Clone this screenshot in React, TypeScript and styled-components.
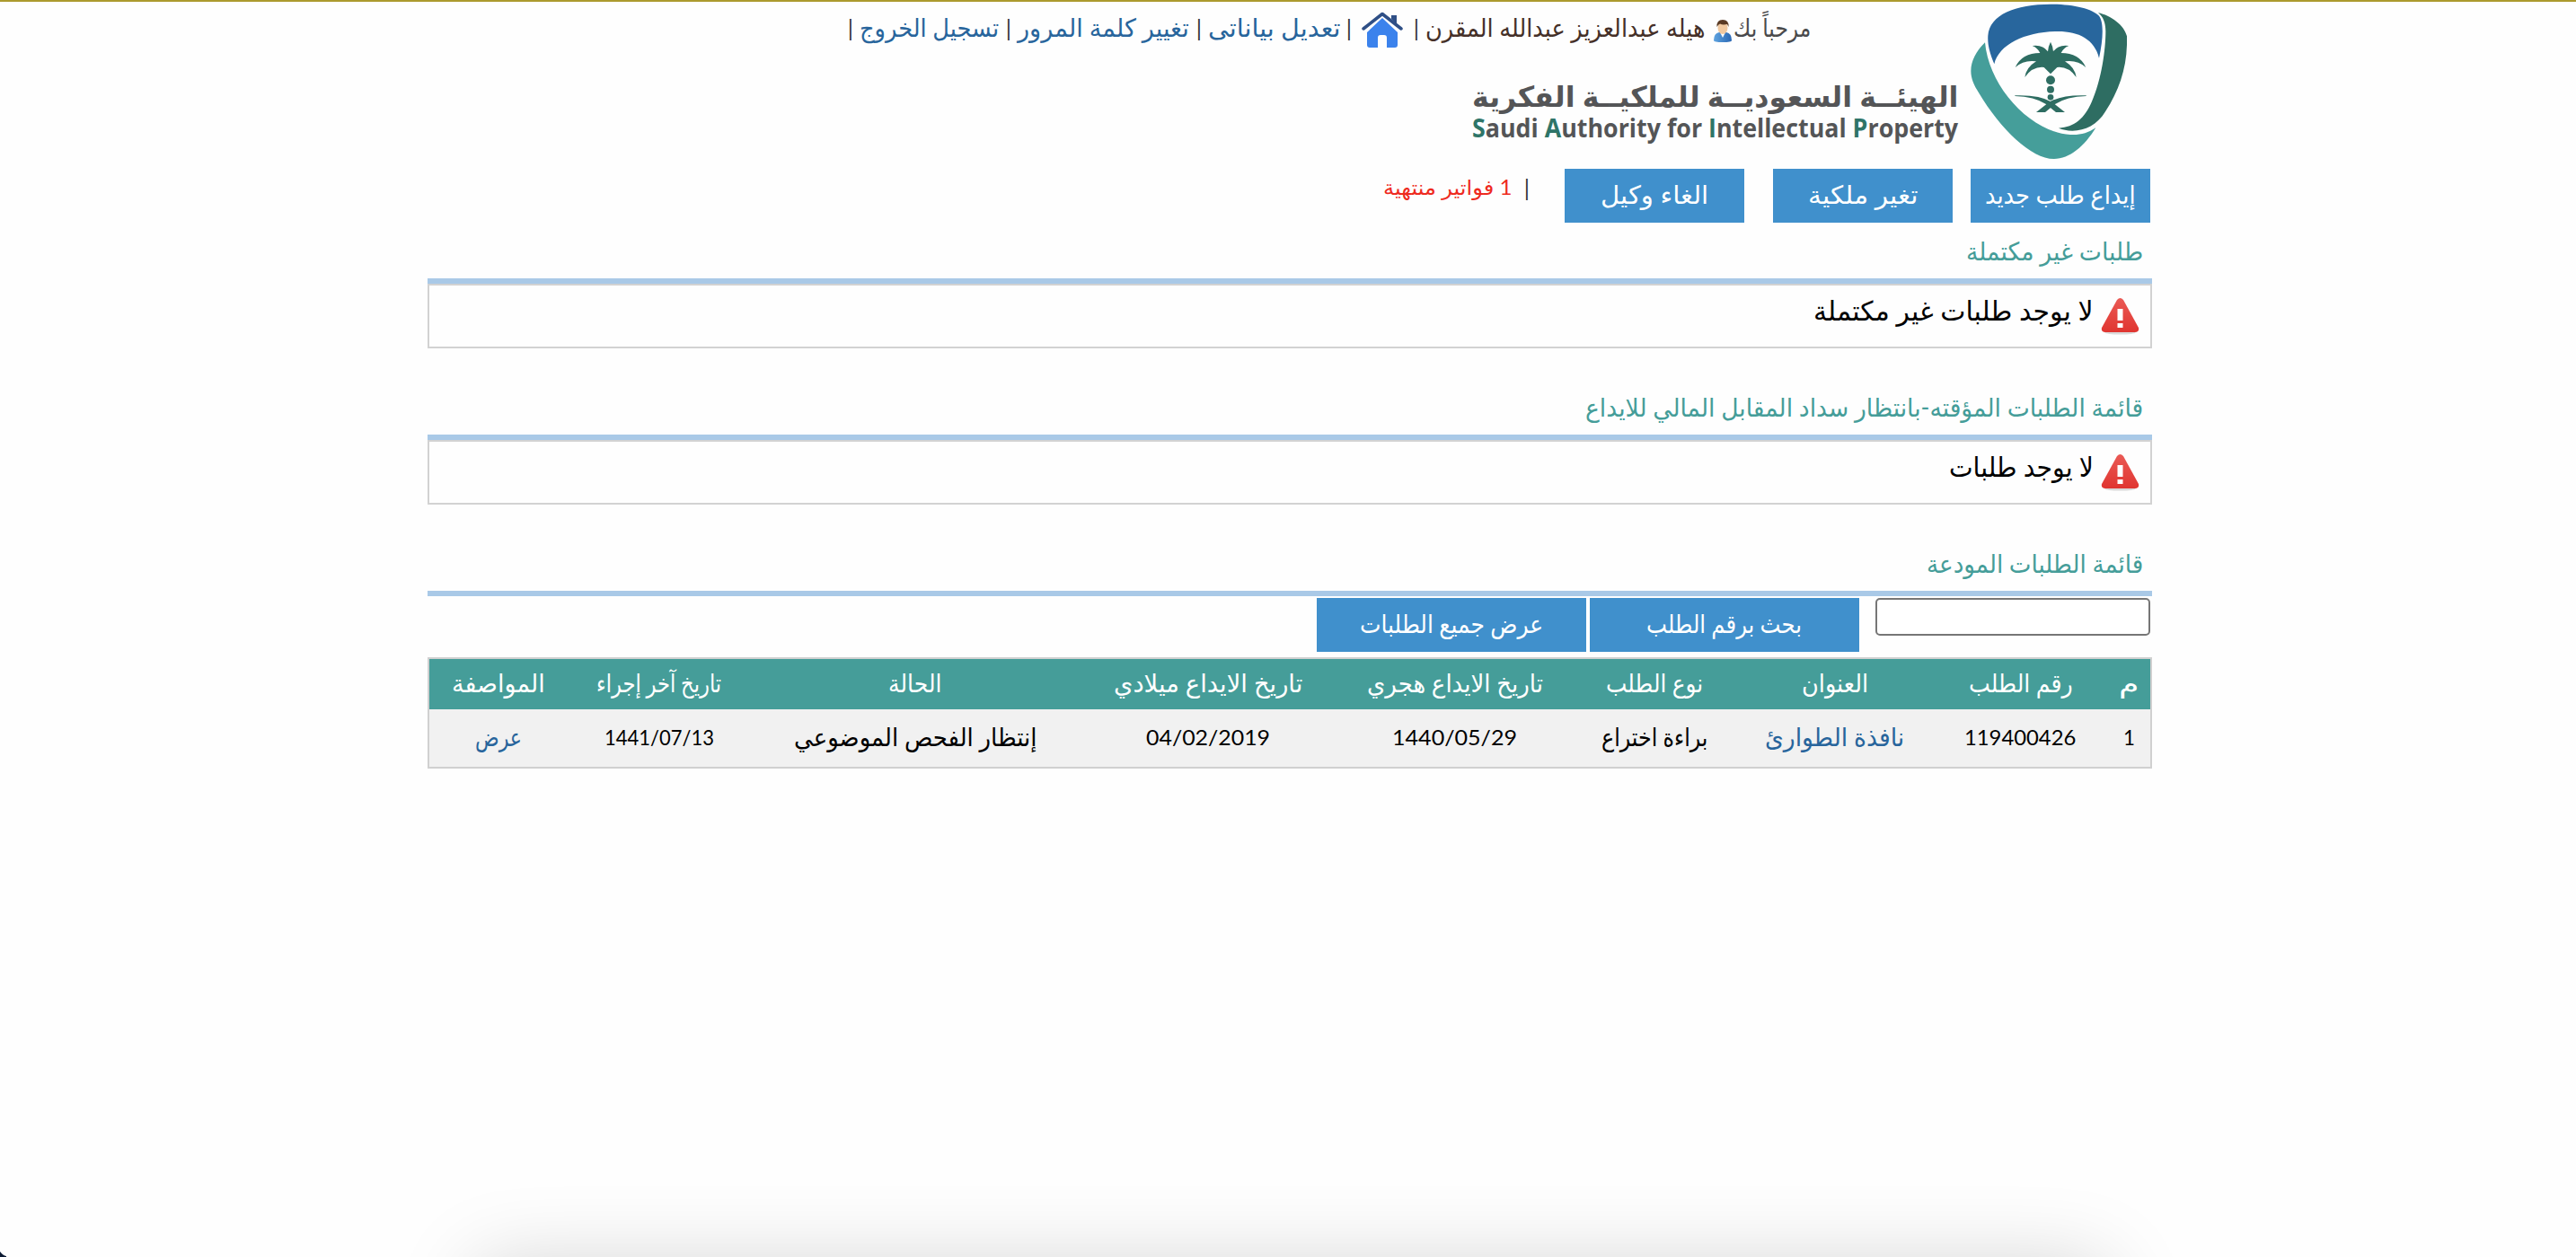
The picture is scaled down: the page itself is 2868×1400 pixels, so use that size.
import React, { useLayoutEffect, useRef, useState } from "react";
import styled, { createGlobalStyle } from "styled-components";

const GlobalStyle = createGlobalStyle`
  * { box-sizing: border-box; }
  body {
    margin: 0;
    background: #fefefe;
    font-family: Lato, "DejaVu Sans", sans-serif;
    font-size: 24px;
    color: #000;
  }
  a { color: inherit; text-decoration: none; }
`;

const Page = styled.div`
  position: relative;
  height: 1400px;
  overflow: hidden;
  border-top: 2px solid #ac9a2e;
  padding: 0 472px 0 476px;
  direction: rtl;
`;

const FitBox = styled.span<{ $w: number; $size: number; $color?: string; $bold?: boolean }>`
  display: flex;
  justify-content: flex-start;
  flex: none;
  width: ${(p) => p.$w}px;
  padding-bottom: 4px;
  font-size: ${(p) => p.$size}px;
  font-weight: ${(p) => (p.$bold ? 700 : 400)};
  color: ${(p) => p.$color ?? "inherit"};
  white-space: nowrap;
`;

const FitInner = styled.span`
  flex: none;
  transform-origin: right center;
`;

type FitProps = {
  w: number;
  size?: number;
  color?: string;
  bold?: boolean;
  children: React.ReactNode;
};

function Fit({ w, size = 28, color, bold, children }: FitProps) {
  const ref = useRef<HTMLSpanElement>(null);
  const [k, setK] = useState(1);
  useLayoutEffect(() => {
    if (ref.current) setK(w / ref.current.offsetWidth);
  }, [w, size]);
  return (
    <FitBox $w={w} $size={size} $color={color} $bold={bold}>
      <FitInner ref={ref} style={{ transform: `scaleX(${k})` }}>
        {children}
      </FitInner>
    </FitBox>
  );
}

/* ---------- header ---------- */

const Header = styled.header`
  display: flex;
  height: 186px;
  padding-right: 28px;
`;

const Emblem = styled.svg`
  flex: none;
  width: 174px;
  height: 174px;
  margin-top: 2px;
`;

const HeaderBody = styled.div`
  flex: 1;
  display: flex;
  flex-direction: column;
`;

const UserBar = styled.nav`
  display: flex;
  align-items: center;
  height: 60px;
  padding-right: 178px;
  color: #4a4a4c;
`;

const Gap = styled.span<{ $w: number }>`
  flex: none;
  width: ${(p) => p.$w}px;
`;

const Pipe = styled.span`
  flex: none;
  display: flex;
  justify-content: center;
  width: 2px;
  padding-bottom: 2px;
  font-size: 25px;
  line-height: 30px;
  color: #333;
`;

const UserIcon = styled.svg`
  flex: none;
  width: 20px;
  height: 25px;
  margin-top: 5px;
`;

const HomeIcon = styled.svg`
  flex: none;
  width: 46px;
  height: 40px;
  margin-top: 1px;
`;

const Brand = styled.div`
  display: flex;
  flex-direction: column;
  padding: 28px 14px 0 0;
  color: #545557;
  font-family: "Open Sans", "DejaVu Sans", sans-serif;
`;

const BrandLine = styled.div`
  height: 35px;
  line-height: 34px;
`;

const Initial = styled.span`
  color: #2f7568;
`;

/* ---------- actions ---------- */

const Actions = styled.div`
  display: flex;
  padding-right: 2px;
  height: 60px;
`;

const Button = styled.button<{ $w: number; $gap?: number }>`
  display: flex;
  flex: none;
  align-items: center;
  justify-content: center;
  width: ${(p) => p.$w}px;
  height: 60px;
  margin: 0 ${(p) => p.$gap ?? 0}px 0 0;
  padding: 0;
  border: 0;
  background: #4090cc;
  color: #fff;
  font-family: inherit;
`;

const Expired = styled.div`
  display: flex;
  align-items: center;
  height: 44px;
  padding-right: 41px;
`;

/* ---------- sections ---------- */

const SectionTitle = styled.h2<{ $top?: number }>`
  display: flex;
  align-items: center;
  box-sizing: content-box;
  height: 58px;
  margin: ${(p) => p.$top ?? 0}px 0 0;
  padding: 4px 10px 0 0;
  border-bottom: 6px solid #a9c9e7;
  color: #459d99;
  font-weight: 400;
`;

const EmptyBox = styled.div`
  display: flex;
  height: 72px;
  padding: 13px 12px 0 0;
  border: 2px solid #d2d2d2;
`;

const AlertIcon = styled.svg`
  flex: none;
  width: 43px;
  height: 43px;
  margin-left: 8px;
`;

const EmptyText = styled.div`
  height: 30px;
  line-height: 28px;
`;

const SearchRow = styled.div`
  display: flex;
  height: 68px;
  padding: 2px 2px 0 0;
`;

const SearchInput = styled.input`
  width: 306px;
  height: 42px;
  margin: 0;
  border: 2px solid #767676;
  border-radius: 5px;
  background: #fff;
`;

const Table = styled.div`
  border: 2px solid #d0d0d0;
`;

const TableRow = styled.div<{ $head?: boolean }>`
  display: grid;
  grid-template-columns: 48px 193px 220px 182px 262px 287px 366px 204px 154px;
  align-items: center;
  justify-items: center;
  height: ${(p) => (p.$head ? 56 : 64)}px;
  background: ${(p) => (p.$head ? "#459d99" : "#f1f1f1")};
  color: ${(p) => (p.$head ? "#fff" : "#000")};
`;

const DockShadow = styled.div`
  position: absolute;
  top: 1408px;
  left: 532px;
  width: 1812px;
  height: 200px;
  box-shadow: 0 0 92px rgba(0, 0, 0, 0.18);
`;

const Corner = styled.div`
  position: absolute;
  left: 0;
  bottom: 0;
  width: 7px;
  height: 10px;
  background: radial-gradient(circle at 10px -2px, transparent 11px, #0c1a33 12px);
`;

const LINK = "#28659c";

const columns: [string, number][] = [
  ["م", 22],
  ["رقم الطلب", 116],
  ["العنوان", 74],
  ["نوع الطلب", 108],
  ["تاريخ الايداع هجري", 196],
  ["تاريخ الايداع ميلادي", 210],
  ["الحالة", 59],
  ["تاريخ آخر إجراء", 139],
  ["المواصفة", 104],
];

const request: [string, number, boolean?][] = [
  ["1", 13],
  ["119400426", 124],
  ["نافذة الطوارئ", 155, true],
  ["براءة اختراع", 119],
  ["1440/05/29", 139],
  ["04/02/2019", 138],
  ["إنتظار الفحص الموضوعي", 270],
  ["1441/07/13", 122],
  ["عرض", 52, true],
];

function Palm() {
  const half = (
    <>
      <path d="M369 141Q377 156 378 173Q395 149 430 154Q412 161 404 178Q465 178 487 226Q458 200 417 206Q450 226 455 259Q428 222 391 226L369 248Z" />
      <path d="M250 320Q330 317 374 342L417 376H387L354 349Q315 324 250 322Z" />
    </>
  );
  return (
    <g fill="#2e6d62">
      {half}
      <g transform="translate(738 0) scale(-1 1)">{half}</g>
      <circle cx="369" cy="269" r="15" />
      <circle cx="369" cy="300" r="12" />
      <circle cx="369" cy="326" r="10" />
    </g>
  );
}

function Logo() {
  return (
    <Emblem viewBox="102 13 522 522">
      <path
        fill="#28669d"
        d="M181 215C166 178 158 150 160 120C166 50 250 15 370 15C445 15 508 30 531 54C547 76 545 130 531 195C516 132 462 106 395 106C290 106 197 147 181 215Z"
      />
      <path
        fill="#459e9a"
        d="M150 143C120 173 103 205 103 238C103 262 112 285 130 312C200 430 305 532 380 532C433 532 482 490 520 428C494 446 466 453 435 451C300 442 163 290 150 143Z"
      />
      <path
        fill="#2e6d62"
        d="M528 44C570 52 615 85 624 122C627 220 600 300 552 374C525 418 485 438 442 438Q415 437 396 429C450 425 482 397 507 340C540 265 553 165 553 105C552 75 545 58 528 44Z"
      />
      <Palm />
    </Emblem>
  );
}

function Alert() {
  return (
    <AlertIcon viewBox="0 0 43 43">
      <defs>
        <linearGradient id="alertFill" x1="0" y1="0" x2="0" y2="1">
          <stop offset="0" stopColor="#ea5a55" />
          <stop offset="1" stopColor="#e03530" />
        </linearGradient>
      </defs>
      <ellipse cx="21.5" cy="39.5" rx="17" ry="2" fill="#d9d9d9" />
      <path
        fill="url(#alertFill)"
        d="M18 3Q21.5-1 25 3L42 34Q43 39 38 39H5Q0 39 1 34Z"
      />
      <path fill="#fff" d="M18.500 13h6v13h-6zM18.500 29h6v5h-6z" />
    </AlertIcon>
  );
}

export default function App() {
  return (
    <>
      <GlobalStyle />
      <Page>
        <Header>
          <Logo />
          <HeaderBody>
            <UserBar>
              <Fit w={86}>مرحباً بك</Fit>
              <Gap $w={2} />
              <UserIcon viewBox="0 0 20 25">
                <defs>
                  <linearGradient id="shirt" x1="0" x2="1">
                    <stop offset="0" stopColor="#5fa4e0" />
                    <stop offset="1" stopColor="#2a67b3" />
                  </linearGradient>
                </defs>
                <path fill="url(#shirt)" d="M0 23Q0 15 6 14H14Q20 15 20 23Q20 25 10 25Q0 25 0 23Z" />
                <path fill="#fff" d="M7 14h6l-3 6z" />
                <ellipse cx="10" cy="9" rx="5.5" ry="7" fill="#f1c9a0" />
                <path fill="#5a3a24" d="M3.500 8Q3 0 10 0Q17 0 16.500 8L15 5Q10 6 7 4.500Q5 5 3.500 8Z" />
              </UserIcon>
              <Gap $w={10} />
              <Fit w={311} color="#453028">هيله عبدالعزيز عبدالله المقرن</Fit>
              <Gap $w={9} />
              <Pipe>|</Pipe>
              <Gap $w={14} />
              <HomeIcon viewBox="0 0 46 40">
                <path fill="#3b82ec" d="M6 23L23 7L40 23V37Q40 40 37 40H28V29Q28 26 25 26H21Q18 26 18 29V40H9Q6 40 6 37Z" />
                <path fill="#2f4f86" d="M33 4h6v10l-6-6z" />
                <path fill="none" stroke="#2f4f86" strokeWidth="3.500" strokeLinecap="round" strokeLinejoin="round" d="M2 19L23 2.500L44 19" />
              </HomeIcon>
              <Gap $w={13} />
              <Pipe>|</Pipe>
              <Gap $w={9} />
              <Fit w={147} color={LINK}>تعديل بياناتى</Fit>
              <Gap $w={9} />
              <Pipe>|</Pipe>
              <Gap $w={10} />
              <Fit w={191} color={LINK}>تغيير كلمة المرور</Fit>
              <Gap $w={9} />
              <Pipe>|</Pipe>
              <Gap $w={10} />
              <Fit w={155} color={LINK}>تسجيل الخروج</Fit>
              <Gap $w={9} />
              <Pipe>|</Pipe>
            </UserBar>
            <Brand>
              <BrandLine>
                <Fit w={541} size={32} bold>الهيئــة السعوديــة للملكيــة الفكرية</Fit>
              </BrandLine>
              <BrandLine>
                <Fit w={541} size={28} bold>
                  <span dir="ltr">
                    <Initial>S</Initial>audi <Initial>A</Initial>uthority for <Initial>I</Initial>ntellectual{" "}
                    <Initial>P</Initial>roperty
                  </span>
                </Fit>
              </BrandLine>
            </Brand>
          </HeaderBody>
        </Header>

        <Actions>
          <Button $w={200}><Fit w={168}>إيداع طلب جديد</Fit></Button>
          <Button $w={200} $gap={20}><Fit w={123}>تغير ملكية</Fit></Button>
          <Button $w={200} $gap={32}><Fit w={120}>الغاء وكيل</Fit></Button>
          <Expired>
            <Pipe>|</Pipe>
            <Gap $w={16} />
            <Fit w={144} size={23} color="#ee2a1e">1 فواتير منتهية</Fit>
          </Expired>
        </Actions>

        <SectionTitle><Fit w={197}>طلبات غير مكتملة</Fit></SectionTitle>
        <EmptyBox>
          <Alert />
          <EmptyText><Fit w={312} size={30}>لا يوجد طلبات غير مكتملة</Fit></EmptyText>
        </EmptyBox>

        <SectionTitle $top={34}><Fit w={621}>قائمة الطلبات المؤقته-بانتظار سداد المقابل المالي للايداع</Fit></SectionTitle>
        <EmptyBox>
          <Alert />
          <EmptyText><Fit w={161} size={30}>لا يوجد طلبات</Fit></EmptyText>
        </EmptyBox>

        <SectionTitle $top={34}><Fit w={241}>قائمة الطلبات المودعة</Fit></SectionTitle>
        <SearchRow>
          <SearchInput />
          <Button $w={300} $gap={18}><Fit w={173}>بحث برقم الطلب</Fit></Button>
          <Button $w={300} $gap={4}><Fit w={204}>عرض جميع الطلبات</Fit></Button>
        </SearchRow>

        <Table>
          <TableRow $head>
            {columns.map(([label, w]) => (
              <Fit key={label} w={w}>{label}</Fit>
            ))}
          </TableRow>
          <TableRow>
            {request.map(([value, w, link], i) => (
              <Fit key={i} w={w} size={/\d/.test(value) ? 24 : 28} color={link ? LINK : undefined}>
                {link ? <a href="#">{value}</a> : value}
              </Fit>
            ))}
          </TableRow>
        </Table>

        <DockShadow />
        <Corner />
      </Page>
    </>
  );
}
